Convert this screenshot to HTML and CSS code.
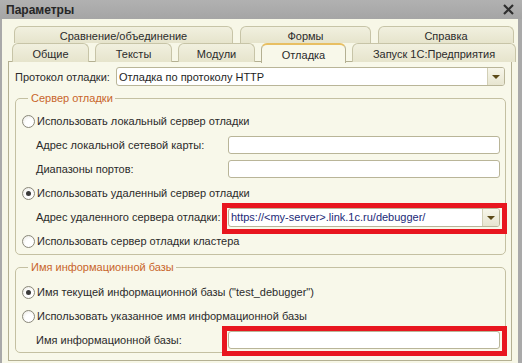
FILE: index.html
```html
<!doctype html>
<html lang="ru">
  <head>
    <meta charset="UTF-8" />
    <title>Параметры</title>
    <link rel="stylesheet" href="styles.css">
  </head>
  <body>
    <div class="window">
      <div class="titlebar">
        <span class="title">Параметры</span>
        <svg class="close" width="11" height="11" viewBox="0 0 11 11">
          <path d="M1 1 L10 10 M10 1 L1 10" stroke="#2e2e2e" stroke-width="2.2" fill="none" />
        </svg>
      </div>

      <div class="client">
        <div class="tab-row tab-row-top">
          <div class="tab tab-compare">Сравнение/объединение</div>
          <div class="tab tab-forms">Формы</div>
          <div class="tab tab-help">Справка</div>
        </div>
        <div class="tab-row tab-row-bottom">
          <div class="tab tab-general">Общие</div>
          <div class="tab tab-texts">Тексты</div>
          <div class="tab tab-modules">Модули</div>
          <div class="tab tab-debug active">Отладка</div>
          <div class="tab tab-launch">Запуск 1С:Предприятия</div>
        </div>

        <div class="panel">
          <div class="protocol-row">
            <span class="protocol-label">Протокол отладки:</span>
            <div class="select">
              <span class="select-text">Отладка по протоколу HTTP</span>
              <span class="drop-btn"><span class="arrow"></span></span>
            </div>
          </div>

          <fieldset class="group">
            <legend>Сервер отладки</legend>
            <div class="radio-row">
              <span class="radio"></span>Использовать локальный сервер отладки
            </div>
            <div class="input-row">
              <span class="caption">Адрес локальной сетевой карты:</span>
              <span class="input"></span>
            </div>
            <div class="input-row">
              <span class="caption">Диапазоны портов:</span>
              <span class="input"></span>
            </div>
            <div class="radio-row">
              <span class="radio checked"></span>Использовать удаленный сервер отладки
            </div>
            <div class="input-row">
              <span class="caption">Адрес удаленного сервера отладки:</span>
              <span class="input input-combo highlight">
                <span class="input-text">https://&lt;my-server&gt;.link.1c.ru/debugger/</span>
                <span class="drop-btn"><span class="arrow"></span></span>
              </span>
            </div>
            <div class="radio-row">
              <span class="radio"></span>Использовать сервер отладки кластера
            </div>
          </fieldset>

          <fieldset class="group group-ib">
            <legend>Имя информационной базы</legend>
            <div class="radio-row">
              <span class="radio checked"></span>Имя текущей информационной базы ("test_debugger")
            </div>
            <div class="radio-row">
              <span class="radio"></span>Использовать указанное имя информационной базы
            </div>
            <div class="input-row">
              <span class="caption">Имя информационной базы:</span>
              <span class="input highlight"></span>
            </div>
          </fieldset>

          <fieldset class="group group-more">
            <legend>Дополнительно</legend>
          </fieldset>
        </div>
      </div>
    </div>
  </body>
</html>
```

FILE: styles.css
```css
* {
  margin: 0;
  padding: 0;
  box-sizing: border-box;
}

body {
  font-family: 'Liberation Sans', Arial, sans-serif;
  font-size: 11px;
  color: #2b2b2b;
  background: #a9a9a9;
}

.window {
  width: 522px;
  height: 363px;
  overflow: hidden;
  display: flex;
  flex-direction: column;
}

.titlebar {
  height: 19px;
  flex-shrink: 0;
  display: flex;
  align-items: center;
  justify-content: space-between;
  padding: 1px 8px 0 6px;
  background: linear-gradient(#b1b1b1, #a5a5a5);
}

.title {
  font-size: 12px;
  font-weight: bold;
  color: #262626;
}

.close {
  display: block;
  margin-top: -1px;
}

.client {
  flex: 1;
  background: #f7f7e7;
  border-left: 2px solid #a9a9a9;
  border-right: 4px solid #a9a9a9;
  padding-top: 7px;
}

/* tabs */

.tab-row {
  display: flex;
  gap: 6px;
}

.tab-row-top {
  padding-left: 12px;
  gap: 7px;
  height: 17px;
}

.tab-row-bottom {
  padding-left: 10px;
  height: 19px;
  margin-bottom: -1px;
}

.tab {
  height: 100%;
  display: flex;
  align-items: center;
  justify-content: center;
  padding-top: 1px;
  border: 1px solid #c7c4a7;
  border-bottom: none;
  border-radius: 6px 6px 0 0;
  background: linear-gradient(#f1f0df, #e6e4cc);
  color: #2b2b2b;
}

.tab-compare { width: 219px; }
.tab-forms { width: 131px; }
.tab-help { width: 136px; }

.tab-general { width: 77px; }
.tab-texts { width: 77px; }
.tab-modules { width: 77px; }
.tab-debug { width: 85px; }
.tab-launch { width: 164px; }

.tab-row-bottom .tab {
  height: 19px;
}

.tab.active {
  position: relative;
  z-index: 1;
  height: 20px;
  background: #f8f8ea;
  border-color: #b4b092;
  border-top: 2px solid #e8bf62;
}

/* panel */

.panel {
  margin-left: 6px;
  width: 504px;
  height: 300px;
  background: #f8f8ea;
  border: 1px solid #b4b092;
  padding: 5px 6px 0 6px;
}

.protocol-row {
  display: flex;
  align-items: center;
  height: 19px;
}

.protocol-label {
  width: 101px;
}

.select {
  flex: 1;
  height: 19px;
  display: flex;
  align-items: center;
  background: #fff;
  border: 1px solid #b9b598;
  border-radius: 3px;
  padding-left: 2px;
  color: #1e1e1e;
}

.select-text,
.input-text {
  flex: 1;
  white-space: nowrap;
  overflow: hidden;
}

.drop-btn {
  width: 17px;
  height: 100%;
  display: flex;
  align-items: center;
  justify-content: center;
  border-left: 1px solid #d2cfb6;
  border-radius: 0 2px 2px 0;
  background: linear-gradient(#f7f6ea, #e7e5d0);
}

.arrow {
  width: 0;
  height: 0;
  border-left: 4px solid transparent;
  border-right: 4px solid transparent;
  border-top: 4px solid #5c4a18;
  margin-top: 1px;
}

/* groups */

.group {
  margin-top: 5px;
  margin-right: -1px;
  border: 1px solid #c4c0a2;
  border-radius: 5px;
  padding: 4px 5px 1px 6px;
}

.group legend {
  margin-left: 6px;
  padding: 0 2px 0 3px;
  line-height: 14px;
  color: #c8652a;
}

.group-ib {
  padding-top: 6px;
  padding-bottom: 0;
}

.group-more {
  margin-top: 8px;
  height: 40px;
}

.radio-row {
  display: flex;
  align-items: center;
  height: 24px;
  white-space: nowrap;
}

.radio {
  width: 13px;
  height: 13px;
  margin-right: 2px;
  border: 1px solid #8a887a;
  border-radius: 50%;
  background: radial-gradient(circle at 60% 65%, #ffffff 40%, #e6e5dc 100%);
  display: flex;
  align-items: center;
  justify-content: center;
}

.radio.checked::before {
  content: '';
  width: 5px;
  height: 5px;
  border-radius: 50%;
  background: #3a3a3a;
}

.input-row {
  display: flex;
  align-items: center;
  height: 24px;
  padding-left: 14px;
}

.caption {
  width: 192px;
  white-space: nowrap;
}

.input {
  flex: 1;
  height: 18px;
  background: #fff;
  border: 1px solid #b9b598;
  border-radius: 3px;
}

.input-combo {
  height: 19px;
  display: flex;
  align-items: center;
  padding-left: 2px;
  color: #1c2a78;
}

.highlight {
  position: relative;
}

.highlight::after {
  content: '';
  position: absolute;
  left: -7px;
  top: -6px;
  right: -8px;
  bottom: -8px;
  border: 5px solid #e8161f;
}
```
